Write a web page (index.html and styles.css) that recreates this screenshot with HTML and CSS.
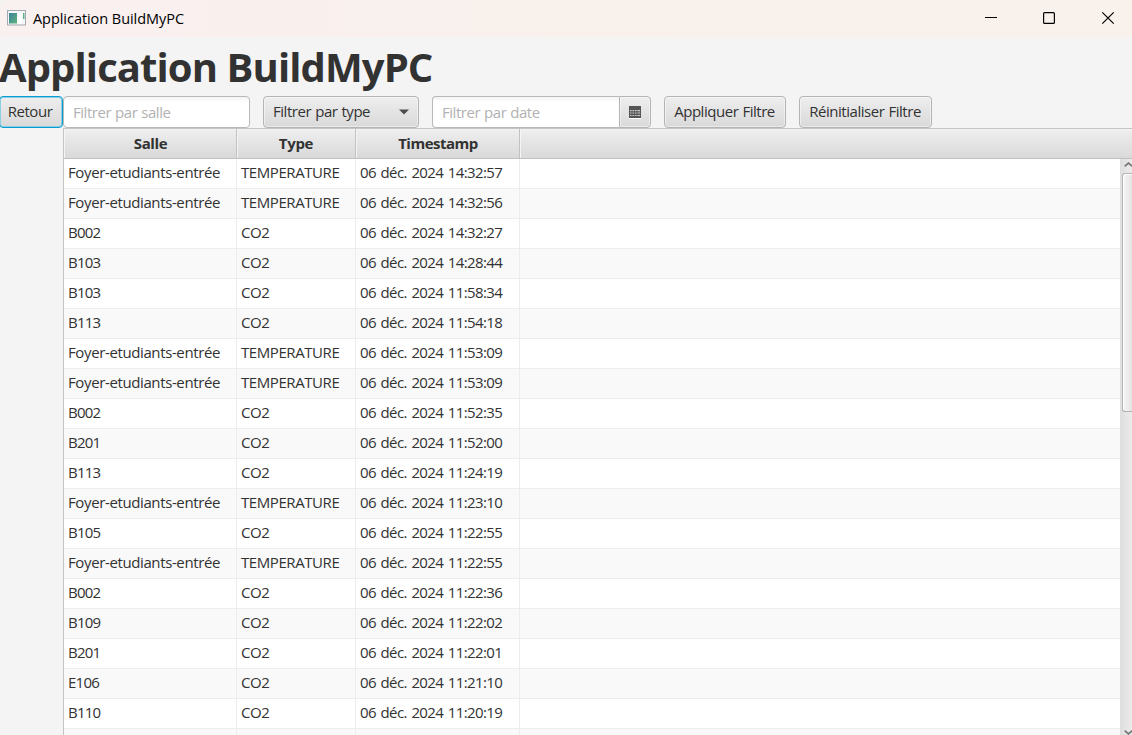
FILE: index.html
```html
<!DOCTYPE html>
<html lang="fr">
<head>
<meta charset="utf-8">
<title>Application BuildMyPC</title>
<link rel="stylesheet" href="styles.css">
</head>
<body>
<div class="window">
  <header class="titlebar">
    <svg class="app-icon" width="19" height="16" viewBox="0 0 19 16">
      <defs><linearGradient id="g" x1="0" y1="0" x2="1" y2="1"><stop offset="0" stop-color="#3d7fa0"/><stop offset="1" stop-color="#5fb57a"/></linearGradient></defs>
      <rect x=".5" y=".5" width="18" height="14.5" fill="#f4f6f8" stroke="#a3a9b0"/>
      <rect x="2" y="3" width="8" height="10.5" fill="url(#g)"/>
      <rect x="11" y="3" width="4" height="10.5" fill="#fff"/>
      <rect x="16" y="3" width="1.5" height="6" fill="#62b08a"/>
    </svg>
    <span class="app-name">Application BuildMyPC</span>
    <svg class="controls" width="132" height="16" viewBox="0 0 132 16" fill="none" stroke="#000">
      <path d="M0 7.5h12"/>
      <rect x="58.6" y="2.6" width="10.8" height="10.8" rx="1" stroke-width="1.2"/>
      <path d="M117.3 2.3l11.4 11.4M128.7 2.3l-11.4 11.4" stroke-width="1.2"/>
    </svg>
  </header>
  <h1 class="heading">Application BuildMyPC</h1>
  <div class="toolbar">
    <button class="btn back">Retour</button>
    <div class="field room">Filtrer par salle</div>
    <div class="btn combo"><span>Filtrer par type</span><svg width="10" height="6" viewBox="0 0 10 6"><path d="M0 .5h10L5 5.5z" fill="#4d4d4d"/></svg></div>
    <div class="date">
      <div class="field date-text">Filtrer par date</div>
      <div class="btn date-btn"><svg width="12" height="13" viewBox="0 0 12 13"><path d="M0 12h12v1H0z" fill="#fff"/><path d="M0 0h12v12H0z" fill="#555"/><path d="M1 4h10v1.2H1zM1 6.5h10v1H1zM1 9h10v1H1z" fill="#ccc"/><path d="M3 4v7M5.5 4v7M8 4v7" stroke="#555" stroke-width=".8"/></svg></div>
    </div>
    <button class="btn apply">Appliquer Filtre</button>
    <button class="btn reset">Réinitialiser Filtre</button>
  </div>
  <main class="table">
    <div class="row head"><div>Salle</div><div>Type</div><div>Timestamp</div><div></div></div>
    <div class="body">
      <div class="rows" id="rows"></div>
      <div class="scroll">
        <svg class="arrow" width="9" height="5" viewBox="0 0 9 5" fill="none" stroke="#777" stroke-width="1.7"><path d="M.7 4.3L4.500 1l3.800 3.300"/></svg>
        <div class="thumb"></div>
        <svg class="arrow down" width="9" height="5" viewBox="0 0 9 5" fill="none" stroke="#777" stroke-width="1.7"><path d="M.7.7L4.5 4 8.300.7"/></svg>
      </div>
    </div>
  </main>
</div>
<script src="app.js"></script>
</body>
</html>
```
FILE: styles.css
```css
* { box-sizing: border-box; }
body { margin: 0; background: #f4f4f4; font-family: "Open Sans", "Noto Sans", sans-serif; font-size: 15px; color: #323232; }
.window { width: 1132px; height: 735px; overflow: hidden; display: flex; flex-direction: column; background: #f4f4f4; border-top-left-radius: 8px; }
.titlebar { height: 37px; flex: none; display: flex; align-items: center; padding: 0 15px 1px 7px; background: linear-gradient(90deg, #f9f0f0, #f9f1eb 60%); color: #000; }
.app-name { margin-left: 7px; font-size: 14.5px; letter-spacing: -0.05px; }
.controls { margin-left: auto; }
.heading { margin: 0 0 0 -1px; height: 59px; flex: none; font-size: 40px; line-height: 59px; font-weight: 700; letter-spacing: -0.9px; white-space: nowrap; }
.toolbar { height: 32px; flex: none; display: flex; }
.btn { height: 32px; padding: 0 1px 2px 0; border: 1px solid #b4b4b4; border-radius: 4px; background: linear-gradient(#eee, #d9d9d9); box-shadow: inset 0 0 0 1px rgba(255,255,255,.45); font: inherit; color: #323232; letter-spacing: -0.46px; word-spacing: 0.6px; line-height: 28px; text-align: center; white-space: nowrap; }
.back { width: 64px; margin-left: -1px; padding-right: 2px; border-color: #039ed3; box-shadow: inset 0 0 0 1px #8fcde4; }
.field { height: 32px; padding-left: 9px; border: 1px solid #b9b9b9; border-radius: 4px; background: linear-gradient(#f3f3f3, #fff 5px); color: #b2b2b2; letter-spacing: -0.46px; word-spacing: 0.5px; line-height: 31px; white-space: nowrap; }
.room { width: 187px; }
.combo { width: 156px; margin-left: 13px; padding: 0 9px; display: flex; align-items: center; justify-content: space-between; }
.combo span { padding-bottom: 2px; }
.date { width: 219px; margin-left: 13px; display: flex; }
.date-text { width: 187px; border-right: 0; border-radius: 4px 0 0 4px; }
.date-btn { width: 32px; padding: 0; border-radius: 0 4px 4px 0; display: flex; align-items: center; justify-content: center; }
.apply { width: 122px; margin-left: 13px; }
.reset { width: 133px; margin-left: 13px; }
.table { flex: 1; min-height: 0; margin-left: 63px; display: flex; flex-direction: column; border-left: 1px solid #c4c4c4; background: #fff; }
.row { height: 30px; flex: none; display: grid; grid-template-columns: 173px 119px 164px 1fr; border-bottom: 1px solid #ededed; line-height: 27px; white-space: nowrap; }
.row > div { padding-left: 4px; border-right: 1px solid #ededed; }
.row > div:last-child { border-right: 0; }
.row:nth-child(even) { background: #f9f9f9; }
.row.head { height: 31px; border-top: 1px solid #c4c4c4; border-bottom-color: #c0c0c0; background: linear-gradient(#efefef, #d9d9d9); font-weight: 700; text-align: center; letter-spacing: -0.3px; line-height: 28px; }
.row.head > div { padding: 0; border-color: #c2c2c2; box-shadow: inset 1px 1px 0 #f4f4f4; }
.row.head > div:first-child { padding-left: 1px; letter-spacing: -0.4px; }
.row.head > div:nth-child(3) { padding-left: 1px; letter-spacing: -0.5px; }
.body { flex: 1; min-height: 0; display: flex; }
.rows { flex: 1; overflow: hidden; }
.room-cell { letter-spacing: -0.38px; }
.room-cell.code { letter-spacing: -0.75px; }
.type-cell { letter-spacing: -0.42px; }
.time-cell { letter-spacing: -0.62px; word-spacing: 1.35px; }
.scroll { width: 12px; flex: none; display: flex; flex-direction: column; padding-left: 2px; background: linear-gradient(90deg, #dedede, #ebebeb); }
.arrow { flex: none; margin: 3px 0 0 2px; }
.thumb { height: 239px; flex: none; margin-top: 6px; border: 1px solid #b4b4b4; border-right: 0; border-radius: 3px 0 0 3px; background: linear-gradient(90deg, #f5f5f5, #e4e4e4); box-shadow: inset 1px 1px 0 #fff; }
.down { margin-top: auto; }
```
FILE: app.js
```js
const records = [
  ["Foyer-etudiants-entrée", "TEMPERATURE", "14:32:57"],
  ["Foyer-etudiants-entrée", "TEMPERATURE", "14:32:56"],
  ["B002", "CO2", "14:32:27"],
  ["B103", "CO2", "14:28:44"],
  ["B103", "CO2", "11:58:34"],
  ["B113", "CO2", "11:54:18"],
  ["Foyer-etudiants-entrée", "TEMPERATURE", "11:53:09"],
  ["Foyer-etudiants-entrée", "TEMPERATURE", "11:53:09"],
  ["B002", "CO2", "11:52:35"],
  ["B201", "CO2", "11:52:00"],
  ["B113", "CO2", "11:24:19"],
  ["Foyer-etudiants-entrée", "TEMPERATURE", "11:23:10"],
  ["B105", "CO2", "11:22:55"],
  ["Foyer-etudiants-entrée", "TEMPERATURE", "11:22:55"],
  ["B002", "CO2", "11:22:36"],
  ["B109", "CO2", "11:22:02"],
  ["B201", "CO2", "11:22:01"],
  ["E106", "CO2", "11:21:10"],
  ["B110", "CO2", "11:20:19"]
];
document.getElementById("rows").innerHTML = records.map(([room, type, time]) =>
  `<div class="row"><div class="room-cell${room.length === 4 ? " code" : ""}">${room}</div><div class="type-cell">${type}</div><div class="time-cell">06 déc. 2024 ${time}</div><div></div></div>`
).join("") + '<div class="row"><div></div><div></div><div></div><div></div></div>';
```
